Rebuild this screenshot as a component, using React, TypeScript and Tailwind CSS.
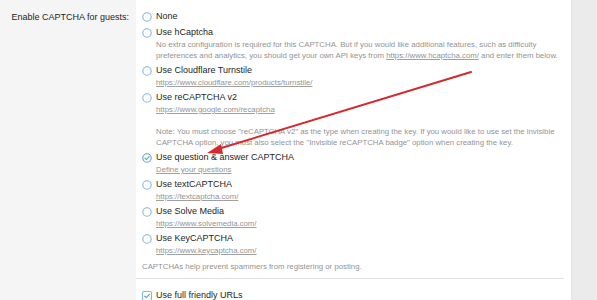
import React from "react";

type Opt = {
  label: string;
  checked?: boolean;
  lines?: React.ReactNode[];
};

const Radio = ({ checked }: { checked?: boolean }) => (
  <svg width="10" height="10" viewBox="0 0 10 10" className="shrink-0">
    <circle cx="5" cy="5" r="4.2" fill="#fff" stroke={checked ? "#5aa0d8" : "#82b6de"} strokeWidth="1.1" />
    {checked && (
      <path d="M2.9 5.2 L4.4 6.6 L7.1 3.7" fill="none" stroke="#5aa0d8" strokeWidth="1.1" strokeLinecap="round" strokeLinejoin="round" />
    )}
  </svg>
);

const Link = ({ children }: { children: React.ReactNode }) => (
  <span className="underline decoration-[#a0a0a0]">{children}</span>
);

const opts: Opt[] = [
  { label: "None" },
  {
    label: "Use hCaptcha",
    lines: [
      "No extra configuration is required for this CAPTCHA. But if you would like additional features, such as difficulty",
      <>preferences and analytics, you should get your own API keys from <Link>https://www.hcaptcha.com/</Link> and enter them below.</>,
    ],
  },
  { label: "Use Cloudflare Turnstile", lines: [<Link>https://www.cloudflare.com/products/turnstile/</Link>] },
  {
    label: "Use reCAPTCHA v2",
    lines: [
      <Link>https://www.google.com/recaptcha</Link>,
      "\u00a0",
      "Note: You must choose \"reCAPTCHA v2\" as the type when creating the key. If you would like to use set the invisible",
      "CAPTCHA option, you must also select the \"Invisible reCAPTCHA badge\" option when creating the key.",
    ],
  },
  { label: "Use question & answer CAPTCHA", checked: true, lines: [<Link>Define your questions</Link>] },
  { label: "Use textCAPTCHA", lines: [<Link>https://textcaptcha.com/</Link>] },
  { label: "Use Solve Media", lines: [<Link>https://www.solvemedia.com/</Link>] },
  { label: "Use KeyCAPTCHA", lines: [<Link>https://www.keycaptcha.com/</Link>] },
];

export default function App() {
  return (
    <div
      className="relative w-[597px] h-[300px] overflow-hidden flex bg-[#ebebeb]"
      style={{ fontFamily: '"Liberation Sans", Arial, sans-serif' }}
    >
      <div className="w-[136px] shrink-0 bg-[#f5f5f5] text-right pr-[7px] pt-[9px] text-[9px] leading-[16px] text-[#1e1e1e] whitespace-nowrap">
        Enable CAPTCHA for guests:
      </div>
      <div className="w-[436px] shrink-0 bg-white border-r border-[#e3e3e3]">
        <div className="pl-[6px] pr-[7px] pt-[9px]">
          {opts.map((o, i) => (
            <div key={i}>
              <div className="flex items-center h-[16px] gap-[4px] text-[9px] text-[#1e1e1e]">
                <Radio checked={o.checked} />
                <span>{o.label}</span>
              </div>
              {o.lines && (
                <div className="-mt-[2px] mb-[2px] pl-[14px] text-[7.8px] leading-[11px] text-[#939393] whitespace-nowrap">
                  {o.lines.map((l, j) => (
                    <div key={j}>{l}</div>
                  ))}
                </div>
              )}
            </div>
          ))}
          <div className="mt-[5px] text-[7.8px] leading-[11px] text-[#939393] pb-[6px]">
            CAPTCHAs help prevent spammers from registering or posting.
          </div>
        </div>
        <div className="mr-[7px] border-t border-[#e0e0e0]" />
        <div className="pl-[6px] pt-[9px] flex items-center h-[25px] gap-[4px] text-[9px] text-[#1e1e1e]">
          <svg width="10" height="10" viewBox="0 0 10 10" className="shrink-0">
            <rect x="0.55" y="0.55" width="8.9" height="8.9" rx="1.3" fill="#fff" stroke="#82b6de" strokeWidth="1.1" />
            <path d="M2.6 5.1 L4.2 6.6 L7.4 3.4" fill="none" stroke="#5aa0d8" strokeWidth="1.2" strokeLinecap="round" strokeLinejoin="round" />
          </svg>
          <span>Use full friendly URLs</span>
        </div>
      </div>
      <svg className="absolute inset-0 pointer-events-none" width="597" height="300">
        <line x1="471" y1="72" x2="218" y2="149" stroke="#d42a2f" strokeWidth="2" strokeLinecap="round" />
        <polygon points="207,153 221,144 223,154" fill="#d42a2f" />
      </svg>
    </div>
  );
}
